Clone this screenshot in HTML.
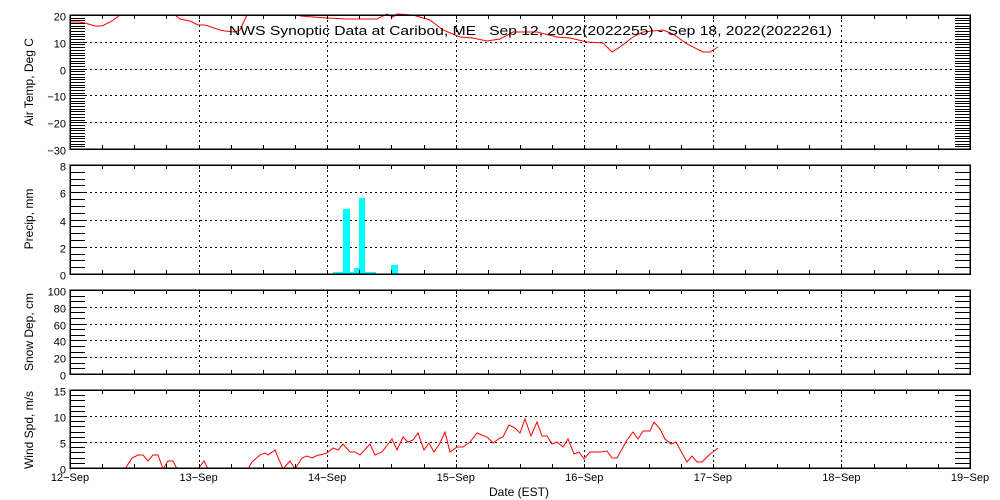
<!DOCTYPE html>
<html><head><meta charset="utf-8"><style>
html,body{margin:0;padding:0;background:#fff;width:1000px;height:500px;overflow:hidden}
svg{display:block;font-family:"Liberation Sans",sans-serif}
</style></head><body>
<svg id="s" width="1000" height="500" viewBox="0 0 1000 500" xmlns="http://www.w3.org/2000/svg">
<g id="grid" stroke="#000" stroke-width="1" stroke-dasharray="2,3" fill="none"></g>
<g fill="#00ffff" shape-rendering="crispEdges">
<rect x="333" y="272" width="43" height="2"/>
<rect x="343" y="209" width="7" height="65"/>
<rect x="354" y="268" width="5" height="6"/>
<rect x="359" y="198" width="6" height="76"/>
<rect x="391" y="265" width="7" height="9"/>
</g>
<g fill="none" stroke="#ff0000" stroke-width="1">
<polyline points="70,22 78,22 85,23 95,26 102,26 112,21 120,15"/>
<polyline points="175,15 180,19 190,21 198,25 205,25 220,30 225,31 235,32 240,30 247,15"/>
<polyline points="300,16 327,18 347,19 377,19 387,14 393,17 397,14 413,15 430,20 443,30 460,37 473,38 487,41 500,39 513,32 537,32 557,37 570,38 587,42 603,43 612,52 620,47 633,37 643,32 663,30 673,34 687,44 703,52 710,52 718,47"/>
<polyline points="70,469 125,469 132,458 138,455 143,455 148,461 153,455 158,455 163,469 168,461 173,461 177,469 198,469 204,461 208,469 248,469 252,462 260,455 265,453 268,455 275,450 283,469 290,461 295,469 302,458 307,456 312,458 318,455 320,455 327,453 333,448 338,450 343,444 350,452 355,452 360,455 370,444 375,455 382,452 392,439 397,450 403,437 408,442 413,440 418,433 424,450 429,443 434,452 440,443 445,432 450,452 457,447 463,447 470,442 477,433 487,437 493,443 500,438 503,437 509,425 515,428 520,433 525,419 531,436 537,422 542,436 547,436 552,444 557,442 563,447 568,439 574,454 579,452 584,459 590,452 600,452 607,451 612,458 617,458 627,440 633,432 638,439 643,431 650,431 654,422 660,429 665,439 671,444 676,442 682,453 687,462 692,456 697,462 702,462 710,454 713,452 718,448"/>
</g>
<g fill="none" stroke="#fff" stroke-width="2" shape-rendering="crispEdges">
<line x1="71" y1="469" x2="969" y2="469"/>
</g>
<g id="ticks" stroke="#000" stroke-width="1" fill="none" shape-rendering="crispEdges"></g>
<g fill="none" stroke="#000" stroke-width="1.5" shape-rendering="crispEdges">
<rect x="70" y="15" width="900" height="134"/>
<rect x="70" y="165" width="900" height="109"/>
<rect x="70" y="290" width="900" height="84"/>
<rect x="70" y="390" width="900" height="78"/>
</g>
<g id="labels" font-size="11" fill="#000" text-anchor="end"></g>
<text x="229" y="35" font-size="13" xml:space="preserve" style="white-space:pre" textLength="603" lengthAdjust="spacingAndGlyphs">NWS Synoptic Data at Caribou, ME   Sep 12, 2022(2022255) - Sep 18, 2022(2022261)</text>
<g font-size="12" fill="#000" text-anchor="middle">
<text transform="translate(33,82) rotate(-90)">Air Temp, Deg C</text>
<text transform="translate(33,219) rotate(-90)">Precip, mm</text>
<text transform="translate(33,332) rotate(-90)">Snow Dep, cm</text>
<text transform="translate(33,430) rotate(-90)">Wind Spd, m/s</text>
<text x="519" y="496">Date (EST)</text>
</g>
</svg>
<script>
var NS="http://www.w3.org/2000/svg";
function el(p,t,a,txt){var e=document.createElementNS(NS,t);for(var k in a)e.setAttribute(k,a[k]);if(txt!==undefined)e.textContent=txt;document.getElementById(p).appendChild(e);}
var panels=[
 {t:15,b:149,min:-30,max:20,maj:[20,10,0,-10,-20,-30],minor:1},
 {t:165,b:274,min:0,max:8,maj:[8,6,4,2,0],minor:0.5},
 {t:290,b:374,min:0,max:100,maj:[100,80,60,40,20,0],minor:6.67},
 {t:390,b:468,min:0,max:15,maj:[15,10,5,0],minor:1}];
var dx=900/7;
panels.forEach(function(p){
 function Y(v){return p.b-(v-p.min)/(p.max-p.min)*(p.b-p.t);}
 for(var v=p.max;v>=p.min-0.001;v-=p.minor){var y=Math.round(Y(v))+0.5;
  el("ticks","line",{x1:70,x2:85,y1:y,y2:y});el("ticks","line",{x1:955,x2:970,y1:y,y2:y});}
 p.maj.forEach(function(v){var y=Math.round(Y(v))+0.5;
  if(v!=p.max&&v!=p.min)el("grid","line",{x1:70,x2:970,y1:y,y2:y});
  el("labels","text",{x:66,y:y+5},String(v).replace("-","\u2212"));});
 for(var i=1;i<7;i++){var x=Math.round(70+i*dx)+0.5;el("grid","line",{x1:x,x2:x,y1:p.t,y2:p.b});}
 for(var j=1;j<28;j++){var x=Math.round(70+j*dx/4)+0.5;
  el("ticks","line",{x1:x,x2:x,y1:p.t,y2:p.t+4});el("ticks","line",{x1:x,x2:x,y1:p.b-4,y2:p.b});}
});
var d=["12","13","14","15","16","17","18","19"];
for(var i=0;i<8;i++){el("labels","text",{x:70+i*dx,y:481,"text-anchor":"middle"},d[i]+"\u2212Sep");}
</script>
</body></html>
